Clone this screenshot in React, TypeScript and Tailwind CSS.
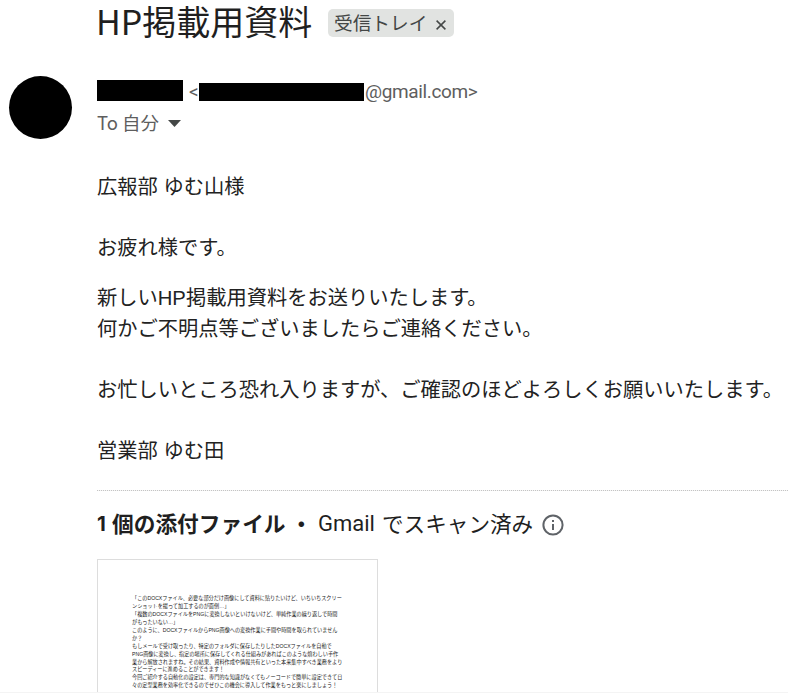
import clsx from "clsx";

const bodyLines = [
  { text: "広報部 ゆむ山様", gap: "mb-[30px]" },
  { text: "お疲れ様です。", gap: "mb-[19px]" },
  { text: "新しいHP掲載用資料をお送りいたします。", gap: "" },
  { text: "何かご不明点等ございましたらご連絡ください。", gap: "mb-[30px]" },
  {
    text: "お忙しいところ恐れ入りますが、ご確認のほどよろしくお願いいたします。",
    gap: "mb-[30px]",
  },
  { text: "営業部 ゆむ田", gap: "" },
];

const previewLines = [
  "「このDOCXファイル、必要な部分だけ画像にして資料に貼りたいけど、いちいちスクリー",
  "ンショットを撮って加工するのが面倒…」",
  "「複数のDOCXファイルをPNGに変換しないといけないけど、単純作業の繰り返しで時間",
  "がもったいない…」",
  "このように、DOCXファイルからPNG画像への変換作業に手間や時間を取られていません",
  "か？",
  "もしメールで受け取ったり、特定のフォルダに保存したりしたDOCXファイルを自動で",
  "PNG画像に変換し、指定の場所に保存してくれる仕組みがあればこのような煩わしい手作",
  "業から解放されますね。その結果、資料作成や情報共有といった本来集中すべき業務をより",
  "スピーディーに進めることができます！",
  "今回ご紹介する自動化の設定は、専門的な知識がなくてもノーコードで簡単に設定できて日",
  "々の定型業務を効率化できるのでぜひこの機会に導入して作業をもっと楽にしましょう！",
];

function SubjectBar() {
  return (
    <div className="flex h-[46px] items-start pl-[96px]">
      <h1 className="w-[232px] text-[34px] leading-[41px] whitespace-nowrap font-['Noto_Sans_CJK_JP',sans-serif]">
        HP掲載用資料
      </h1>
      <div className="mt-[9px] flex h-7 w-[126px] items-center rounded-[5px] bg-[#e1e3e1] pl-[6px] text-[#444746]">
        <span className="-mt-[3px] w-[102px] text-[18.7px] leading-[26px] whitespace-nowrap font-['Noto_Sans_CJK_JP',sans-serif]">
          受信トレイ
        </span>
        <svg viewBox="0 0 10 10" className="mt-[3px] size-[10px]">
          <path d="M.6.6 9.4 9.4M9.4.6.6 9.4" stroke="currentColor" strokeWidth="1.5" />
        </svg>
      </div>
    </div>
  );
}

function SenderHeader() {
  return (
    <div className="mt-[30px] flex pl-[9px] text-[#5e5e5e]">
      <div className="size-[63px] shrink-0 rounded-full bg-black" />
      <div className="ml-[25px]">
        <div className="flex h-[31px] items-start text-[19px] leading-[31px] font-['Roboto',sans-serif]">
          <span className="mt-1 h-[21px] w-[86px] bg-black" />
          <span className="ml-[6px] w-[10px]">&lt;</span>
          <span className="mt-[7px] h-[18px] w-[165px] bg-black" />
          <span className="ml-px tracking-[-0.36px]">@gmail.com&gt;</span>
        </div>
        <div className="flex h-8 items-center">
          <span className="text-[18.5px] font-['Noto_Sans_CJK_JP',sans-serif]">To 自分</span>
          <svg viewBox="0 0 13 7" className="ml-[9px] h-[7px] w-[13px]">
            <path d="M0 0h13L6.5 7z" fill="#444746" />
          </svg>
        </div>
      </div>
    </div>
  );
}

function MessageBody() {
  return (
    <div className="mt-[33px] pl-[97px] text-[20.25px] text-[#222222] font-['Liberation_Sans','Noto_Sans_CJK_JP',sans-serif]">
      {bodyLines.map((line) => (
        <p key={line.text} className={clsx("h-[31px] leading-[31px] whitespace-nowrap", line.gap)}>
          {line.text}
        </p>
      ))}
    </div>
  );
}

function InfoIcon() {
  return (
    <svg viewBox="0 0 22 22" className="size-[22px] text-[#5f6368]" fill="none">
      <circle cx="11" cy="11" r="9.6" stroke="currentColor" strokeWidth="2" />
      <path d="M11 10v6M11 6v2" stroke="currentColor" strokeWidth="2" />
    </svg>
  );
}

function Attachments() {
  return (
    <div className="mt-[23px] ml-[97px]">
      <div className="h-px bg-[repeating-linear-gradient(90deg,#c4c4c4_0_1px,#f4f4f4_1px_2px)]" />
      <div className="flex h-[68px] items-center whitespace-nowrap text-[21.7px] leading-[30px] font-['Noto_Sans_CJK_JP',sans-serif]">
        <div className="-mt-[4px] flex w-[221px] font-bold">
          <span className="w-[15px] pt-px text-[20.5px] font-['Inter',sans-serif]">1</span>
          <span>個の添付ファイル ・</span>
        </div>
        <div className="-mt-[4px] flex w-[224px]">
          <span className="w-[64px] pt-px text-[22px] font-['Roboto',sans-serif]">Gmail</span>
          <span className="text-[21.6px]">でスキャン済み</span>
        </div>
        <InfoIcon />
      </div>
      <div className="h-[133px] w-[281px] overflow-hidden border border-b-0 border-[#dddddd] pt-[35px] pl-[34px]">
        {previewLines.map((line) => (
          <p
            key={line}
            className="h-[7.95px] text-[5.15px] leading-[7.95px] whitespace-nowrap text-[#222222] font-['Liberation_Sans','Noto_Sans_CJK_JP',sans-serif]"
          >
            {line}
          </p>
        ))}
      </div>
      <div className="-ml-[97px] h-px bg-[#f4f4f4]" />
    </div>
  );
}

export default function App() {
  return (
    <main className="h-[693px] w-[788px] overflow-hidden bg-white text-[#1f1f1f]">
      <SubjectBar />
      <SenderHeader />
      <MessageBody />
      <Attachments />
    </main>
  );
}
